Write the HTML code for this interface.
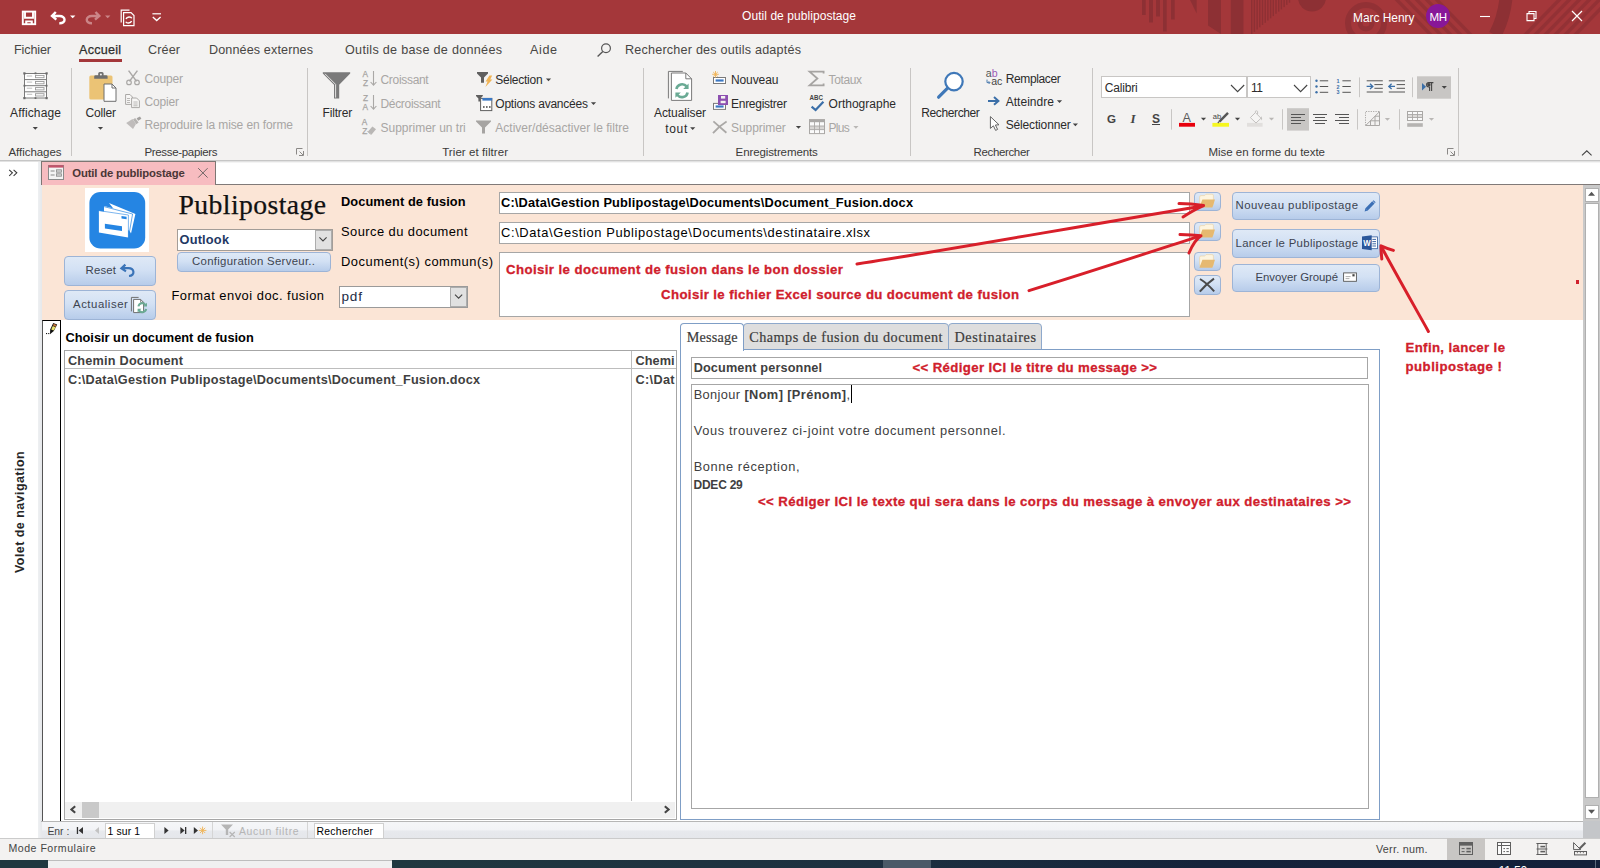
<!DOCTYPE html>
<html lang="fr"><head><meta charset="utf-8"><title>Outil de publipostage</title>
<style>
html,body{margin:0;padding:0}
body{width:1600px;height:868px;position:relative;overflow:hidden;background:#fff;font-family:"Liberation Sans",sans-serif}
.a{position:absolute}
.t{position:absolute;white-space:pre;line-height:1;font-family:"Liberation Sans",sans-serif;font-size:12px;color:#2b2b2b}
.tab{font-size:12.6px;color:#484644}
.rb{font-size:12px;color:#2b2b2b}
.rd{font-size:12px;color:#a8a6a4}
.gl{font-size:11.5px;color:#3b3a39}
.w{color:#fff}
.cal{font-size:12.9px;color:#000}
.calb{font-size:12.8px;color:#000;font-weight:bold}
.calg{font-size:12.8px;color:#404040}
.calgb{font-size:12.7px;color:#404040;font-weight:bold}
.btn{font-size:11.4px;color:#3d4450}
.red{font-size:13.2px;color:#d0202c;font-weight:bold;-webkit-text-stroke:0.3px #d0202c}
.ser{font-family:"Liberation Serif",serif;font-size:14.2px;color:#3c3c3c;-webkit-text-stroke:0.2px #3c3c3c}
.btnbox{position:absolute;border:1px solid #9db4d6;border-radius:4px;background:linear-gradient(#dfe9f6,#d3e1f4 45%,#b7ccea);box-sizing:border-box}
.box{position:absolute;background:#fff;border:1px solid #a6a6a6;box-sizing:border-box}
.sep{position:absolute;width:1px;background:#c8c6c4}
</style></head><body>

<!-- ================= TITLE BAR ================= -->
<div class="a" id="titlebar" style="left:0;top:0;width:1600px;height:34px;background:#a4373a"></div>

<svg class="a" style="left:0;top:0" width="1600" height="34" viewBox="0 0 1600 34">
<g fill="#8d3034">
<rect x="1142" y="0" width="3.7" height="15"/><rect x="1149" y="0" width="4" height="22.5"/><rect x="1156" y="0" width="4" height="16.5"/><rect x="1163" y="0" width="3.7" height="31.5"/><rect x="1171" y="0" width="3.7" height="19.5"/>
<polygon points="1190,0 1196.7,0 1196.7,13.5"/>
<polygon points="1208,0 1221,0 1221,34 1208,25.5"/>
<rect x="1230.8" y="0" width="12.7" height="34"/>
<rect x="1251.0" y="0" width="1.4" height="34.0"/><rect x="1253.7" y="0" width="1.4" height="31.8"/><rect x="1256.4" y="0" width="1.4" height="29.5"/><rect x="1259.1" y="0" width="1.4" height="27.3"/><rect x="1261.8" y="0" width="1.4" height="25.0"/><rect x="1264.5" y="0" width="1.4" height="22.8"/><rect x="1267.2" y="0" width="1.4" height="20.6"/><rect x="1269.9" y="0" width="1.4" height="18.3"/><rect x="1272.6" y="0" width="1.4" height="16.1"/><rect x="1275.3" y="0" width="1.4" height="13.8"/><rect x="1278.0" y="0" width="1.4" height="11.6"/><rect x="1280.7" y="0" width="1.4" height="9.4"/><rect x="1283.4" y="0" width="1.4" height="7.1"/><rect x="1286.1" y="0" width="1.4" height="4.9"/><rect x="1288.8" y="0" width="1.4" height="2.7"/>
<circle cx="1312" cy="-2.5" r="14"/>
</g>
<g fill="none" stroke="#8d3034">
<circle cx="1366" cy="23" r="18" stroke-width="6" opacity="0.8"/>
<circle cx="1366" cy="23" r="6" stroke-width="5" opacity="0.8"/>
<path d="M1506,-2 Q1504,18 1495,35" stroke-width="13"/>
<path d="M1394,-3 L1432,36 M1404,-3 L1442,36 M1414,-3 L1452,36 M1424,-3 L1462,36 M1434,-3 L1472,36" stroke-width="3.5" opacity="0.75"/>
<path d="M1562,-3 L1524,36 M1572,-3 L1534,36 M1582,-3 L1544,36 M1592,-3 L1554,36 M1602,-3 L1564,36 M1612,-3 L1574,36" stroke-width="3.5" opacity="0.75"/>
</g>
<!-- save -->
<g fill="none" stroke="#fff" stroke-width="1.9">
<rect x="22.8" y="11.6" width="12.4" height="12.6"/>
<path d="M25,11.6 V17.8 H33 V11.6"/>
</g>
<path d="M25.2,20.4 H32.8 V24.5 H30.7 V22.2 H27.3 V24.5 H25.2 Z" fill="#fff"/>
<!-- undo -->
<path d="M55.8,12 L52,16 L56.3,19.6 M52.5,16 H59.5 C66,16 66.5,23.5 59.3,23.2" fill="none" stroke="#fff" stroke-width="2.4"/>
<polygon points="70,15.6 75.4,15.6 72.7,18.3" fill="#fff"/>
<!-- redo -->
<path d="M95.5,12 L99.3,16 L95,19.6 M98.8,16 H91.8 C85.3,16 84.8,23.5 92,23.2" fill="none" stroke="#cb8587" stroke-width="2.4"/>
<polygon points="105,15.6 110.4,15.6 107.7,18.3" fill="#cb8587"/>
<!-- doc refresh -->
<g fill="none" stroke="#fff" stroke-width="1.2">
<path d="M121.2,22.5 V10.2 H129.5"/>
<path d="M123.6,12.6 H131 L134,15.6 V25.6 H123.6 Z"/>
<path d="M126,19 C127,16.5 131,16.5 131.8,18.3 M131.6,21 C130.6,23.5 126.6,23.5 125.8,21.7" stroke-width="1.4"/>
</g>
<!-- customize -->
<path d="M152.4,13.8 H161" stroke="#fff" stroke-width="1.2"/>
<path d="M152.8,17 L156.7,20.6 L160.6,17" fill="none" stroke="#fff" stroke-width="1.3"/>
<!-- window controls -->
<path d="M1480,16.5 H1490" stroke="#fff" stroke-width="1.1"/>
<path d="M1527,13.6 H1534 V20.6 H1527 Z M1529,13.4 V11.5 H1536 V18.5 H1534.2" fill="none" stroke="#fff" stroke-width="1.1"/>
<path d="M1572,11 L1582,21 M1582,11 L1572,21" stroke="#fff" stroke-width="1.2"/>
</svg>
<span class="t w" style="left:742px;top:10.00px;letter-spacing:0.062px;font-size:12px">Outil de publipostage</span>
<span class="t w" style="left:1353px;top:10.80px;transform:scaleX(0.9023);transform-origin:0 0;font-size:13.2px">Marc Henry</span>
<div class="a" style="left:1426px;top:4px;width:24px;height:24px;border-radius:12px;background:#881798"></div>
<span class="t w" style="left:1429.6px;top:10.80px;font-size:11.6px;letter-spacing:-0.6px">MH</span>

<!-- ================= RIBBON TABS ================= -->
<div class="a" id="tabrow" style="left:0;top:34px;width:1600px;height:29px;background:#f3f2f1"></div>
<span class="t tab" style="left:14px;top:43.50px;letter-spacing:-0.133px;">Fichier</span>
<span class="t tab" style="left:79px;top:43.50px;letter-spacing:0.232px;color:#2f2e2d;-webkit-text-stroke:0.25px #2f2e2d">Accueil</span>
<div class="a" style="left:79px;top:59px;width:43px;height:3px;background:#a4373a"></div>
<span class="t tab" style="left:148px;top:43.50px;letter-spacing:0.125px;">Créer</span>
<span class="t tab" style="left:209px;top:43.50px;letter-spacing:0.119px;">Données externes</span>
<span class="t tab" style="left:345px;top:43.50px;letter-spacing:0.298px;">Outils de base de données</span>
<span class="t tab" style="left:530px;top:43.50px;letter-spacing:0.594px;">Aide</span>
<span class="t tab" style="left:625px;top:43.50px;letter-spacing:0.210px;">Rechercher des outils adaptés</span>

<!-- ================= RIBBON ================= -->
<div class="a" id="ribbon" style="left:0;top:63px;width:1600px;height:97px;background:#f3f2f1"></div>
<div class="a" style="left:0;top:160px;width:1600px;height:1px;background:#c6c6c6"></div>
<div class="a" style="left:0;top:161px;width:1600px;height:1px;background:#e2e2e2"></div>
<div class="a" style="left:0;top:162px;width:1600px;height:1px;background:#f4f4f4"></div>
<div class="sep" style="left:71px;top:68px;height:88px"></div>
<div class="sep" style="left:307px;top:68px;height:88px"></div>
<div class="sep" style="left:643px;top:68px;height:88px"></div>
<div class="sep" style="left:910px;top:68px;height:88px"></div>
<div class="sep" style="left:1092px;top:68px;height:88px"></div>
<div class="sep" style="left:1458px;top:68px;height:88px"></div>

<div class="a" style="left:1101px;top:76px;width:146px;height:22px;background:#fff;border:1px solid #c8c6c4;box-sizing:border-box"></div>
<div class="a" style="left:1247px;top:76px;width:64px;height:22px;background:#fff;border:1px solid #c8c6c4;border-left:1px solid #c8c6c4;box-sizing:border-box"></div>
<svg class="a" style="left:0;top:33px" width="1600" height="130" viewBox="0 33 1600 130">
<!-- search tab icon -->
<circle cx="606" cy="48.2" r="4.4" fill="none" stroke="#555" stroke-width="1.2"/>
<path d="M602.8,51.6 L597.6,56.4" stroke="#555" stroke-width="1.4"/>


<!-- Affichage -->
<g>
<rect x="24.5" y="73.5" width="22" height="24.5" fill="#fff" stroke="#7a7a7a" stroke-width="1"/>
<path d="M24.5,79.6 H46.5 M24.5,85.7 H46.5 M24.5,91.8 H46.5" stroke="#7a7a7a" stroke-width="1"/>
<g fill="none" stroke="#9a9a9a" stroke-width="0.9">
<rect x="35.5" y="75.4" width="8.5" height="2.3"/><rect x="35.5" y="81.5" width="8.5" height="2.3"/><rect x="35.5" y="87.6" width="8.5" height="2.3"/><rect x="35.5" y="93.7" width="8.5" height="2.3"/>
<path d="M26.8,76 H32.2 M26.8,82.1 H32.2 M26.8,88.2 H32.2 M26.8,94.3 H32.2" stroke="#b5b5b5"/>
</g>
<g fill="#6a6a6a">
<rect x="23.3" y="72.3" width="2.2" height="2.2"/><rect x="45.5" y="72.3" width="2.2" height="2.2"/><rect x="23.3" y="97" width="2.2" height="2.2"/><rect x="45.5" y="97" width="2.2" height="2.2"/>
<rect x="34.6" y="72.4" width="1.8" height="1.8"/><rect x="34.6" y="97.2" width="1.8" height="1.8"/><rect x="23.5" y="84.8" width="1.8" height="1.8"/><rect x="45.7" y="84.8" width="1.8" height="1.8"/>
</g>
</g>

<!-- Coller -->
<rect x="89.3" y="75.4" width="23.2" height="24" rx="1.5" fill="#ebc375"/>
<path d="M94.2,78.8 V76.6 Q94.2,75.2 95.6,75.2 H98.2 V73.6 Q98.2,72 99.8,72 H102 Q103.6,72 103.6,73.6 V75.2 H106.2 Q107.6,75.2 107.6,76.6 V78.8 Z" fill="#6f6f6f"/>
<circle cx="100.9" cy="74.6" r="1" fill="#f3f2f1"/>
<path d="M104,84 H112 L116,88 V101.3 H104 Z" fill="#fff" stroke="#6f6f6f" stroke-width="1"/>
<path d="M112,84 V88 H116" fill="none" stroke="#6f6f6f" stroke-width="1"/>

<!-- Couper (scissors, disabled) -->
<g fill="none" stroke="#aaa8a6" stroke-width="1.5">
<path d="M128.6,70.6 L136.6,81.4 M137.4,70.6 L129.4,81.4"/>
<circle cx="129" cy="82.4" r="2.3" stroke-width="1.2"/><circle cx="137" cy="82.4" r="2.3" stroke-width="1.2"/>
</g>
<!-- Copier -->
<g fill="#f7f6f5" stroke="#aaa8a6" stroke-width="1">
<path d="M125.6,94.5 H130 L132.4,97 V104.4 H125.6 Z"/>
<path d="M131.6,98 H136.6 L139.4,100.8 V107.6 H131.6 Z"/>
<path d="M127,98.5 H130 M127,100.5 H130 M127,102.5 H130 M133.4,102 H137.6 M133.4,104 H137.6 M133.4,105.8 H137.6" fill="none" stroke-width="0.8"/>
</g>
<!-- brush -->
<g fill="#b5b3b1">
<path d="M126.2,123 L132.5,119 L136,124 L133,129 Z" opacity="0.85"/>
<path d="M133,119.5 L135.2,118 L138.6,122.6 L136.4,124.2 Z"/>
<path d="M136.6,118.2 L140,116.6 L141.4,118.8 L138.2,120.8 Z" fill="#a3a19f"/>
</g>

<!-- Filtrer big -->
<path d="M322.8,72.2 H350.2 V73.6 L339.2,84.8 V98.6 H334 V84.8 L322.8,73.6 Z" fill="#7a7a7a"/>
<path d="M325,73.8 L335.6,84.4 V97.6" fill="none" stroke="#f3f2f1" stroke-width="0.9"/>

<!-- sort icons -->
<g font-family="Liberation Sans, sans-serif" font-size="8.3" fill="#a6a4a2" stroke="#a6a4a2" stroke-width="0.25">
<text x="362.6" y="77.1">A</text><text x="363" y="85.6">Z</text>
<text x="363" y="101.1">Z</text><text x="362.6" y="109.6">A</text>
<text x="361.8" y="125.1">A</text><text x="362.2" y="133.6">Z</text>
</g>
<g fill="none" stroke="#aaa8a6" stroke-width="1.1">
<path d="M373.5,71 V85 M370.6,82 L373.5,85.2 L376.4,82"/>
<path d="M373.5,95 V109 M370.6,106 L373.5,109.2 L376.4,106"/>
</g>
<path d="M368,131.6 L372.4,126.4 L376,129.2 L371.6,134.4 Z" fill="#b9b7b5"/>
<path d="M367.6,131.2 L371,134.6" stroke="#aaa8a6" stroke-width="1"/>

<!-- Sélection -->
<path d="M477,72 H488 V73.4 L484,77.6 V82.8 H481 V77.6 L477,73.4 Z" fill="#5f5f5f"/>
<polygon points="489.4,75.6 492.2,75.6 490.2,79.4 492.4,79.4 485.4,87 487.6,81.6 485.6,81.6" fill="#f0b354"/>
<!-- Options avancées -->
<path d="M476,95 H482.8 V96 L480.4,98.6 V101.6 H478.4 V98.6 L476,96 Z" fill="#5f5f5f"/>
<rect x="480.6" y="98.4" width="11.2" height="12.2" fill="#fff" stroke="#5f5f5f" stroke-width="1"/>
<rect x="482.4" y="98" width="9.8" height="2.6" fill="#3b78c3"/>
<path d="M483,107 h1.6 M486,107 h1.6 M489,107 h1.6" stroke="#444" stroke-width="1.4"/>
<!-- Activer filtre -->
<path d="M476,120.4 H491 V121.6 L485,127.6 V133.6 H482 V127.6 L476,121.6 Z" fill="#a6a4a2"/>

<!-- Actualiser tout -->
<path d="M668.4,98.4 V71.4 H682.8" fill="none" stroke="#7a7a7a" stroke-width="1"/>
<path d="M671.4,73 H685.8 L691.6,78.8 V100.4 H671.4 Z" fill="#fff" stroke="#7a7a7a" stroke-width="1"/>
<path d="M685.8,73 V78.8 H691.6" fill="none" stroke="#7a7a7a" stroke-width="1"/>
<g fill="none" stroke="#6aaa94" stroke-width="2.6">
<path d="M676.4,89 A5.8,5.8 0 0 1 686.6,86.4"/>
<path d="M687.6,92.4 A5.8,5.8 0 0 1 677.4,95"/>
</g>
<path d="M688.6,83.6 V89 H683.2 Z M675.4,97.8 V92.4 H680.8 Z" fill="#6aaa94"/>

<!-- Nouveau -->
<rect x="713.5" y="77.5" width="12" height="6" fill="#fff" stroke="#7a7a7a" stroke-width="1"/>
<rect x="715.6" y="79.4" width="8" height="2.2" fill="#3b78c3"/>
<path d="M715.5,71 v6.6 M712.2,74.3 h6.6 M713.2,72 l4.6,4.6 M717.8,72 l-4.6,4.6" stroke="#f0b354" stroke-width="0.9"/>
<!-- Enregistrer -->
<rect x="713.5" y="103.4" width="12" height="6" fill="#fff" stroke="#7a7a7a" stroke-width="1"/>
<rect x="715.6" y="105.4" width="8" height="2.2" fill="#3b78c3"/>
<rect x="718" y="95" width="10" height="10" fill="#8c4fb0"/>
<rect x="721" y="96" width="4.2" height="2.6" fill="#f3f2f1"/><rect x="720.6" y="100.8" width="5" height="2.4" fill="#f3f2f1"/>
<!-- Supprimer X -->
<path d="M713.4,121.4 L726.4,132.8 M726.6,121.6 C721,125 716.6,129 713,133.2" fill="none" stroke="#aaa8a6" stroke-width="1.8"/>

<!-- Totaux sigma -->
<path d="M823.6,73.4 V71.6 H809.6 L817.4,78.5 L809.6,85.4 H823.6 V83.4" fill="none" stroke="#a6a4a2" stroke-width="1.8"/>
<!-- Orthographe -->
<text x="809.6" y="99.6" font-family="Liberation Sans, sans-serif" font-size="6.4" font-weight="bold" fill="#444" textLength="13.4" lengthAdjust="spacingAndGlyphs">ABC</text>
<path d="M811.6,106.6 L815.6,110 L823.4,101.8" fill="none" stroke="#3b6fa8" stroke-width="2.2"/>
<!-- Plus -->
<rect x="809.5" y="119.6" width="15" height="14" fill="#fafafa" stroke="#aaa8a6" stroke-width="1"/>
<rect x="809.5" y="119.6" width="15" height="2.6" fill="#aaa8a6"/>
<rect x="810" y="126" width="14" height="3.6" fill="#d8d6d4"/>
<path d="M814.5,122 V133.6 M819.5,122 V133.6 M809.5,126 H824.5 M809.5,129.6 H824.5" stroke="#aaa8a6" stroke-width="0.9"/>

<!-- Rechercher magnifier -->
<circle cx="954" cy="81.6" r="8.7" fill="#fff" stroke="#3f78b8" stroke-width="2.2"/>
<path d="M947.6,88.2 L938.6,97.2" stroke="#3f78b8" stroke-width="3.2" stroke-linecap="round"/>
<!-- Remplacer -->
<g font-family="Liberation Sans, sans-serif" font-size="10.6">
<text x="985.8" y="77" fill="#555">a<tspan fill="#9b59b6">b</tspan></text>
<text x="991.2" y="84.6" fill="#444">ac</text>
</g>
<path d="M987,79.6 V82.6 H989.8 M988.6,81.2 L990,82.6 L988.6,84" fill="none" stroke="#3b6fa8" stroke-width="0.9"/>
<!-- Atteindre -->
<path d="M988,100.9 H998 M994,97 L998.4,100.9 L994,104.8" fill="none" stroke="#3b6fa8" stroke-width="2"/>
<!-- Sélectionner cursor -->
<path d="M990.4,116.6 V128.4 L993.4,125.8 L995.6,130.4 L997.6,129.4 L995.4,125 L999,124.8 Z" fill="#fff" stroke="#555" stroke-width="0.9"/>

<!-- font box chevrons -->
<path d="M1231,85 L1237.6,91.6 L1244.2,85 M1294,85 L1300.6,91.6 L1307.2,85" fill="none" stroke="#444" stroke-width="1.1"/>

<!-- bullets -->
<g fill="#3b6fa8"><circle cx="1316.5" cy="80.8" r="1.2"/><circle cx="1316.5" cy="86.5" r="1.2"/><circle cx="1316.5" cy="92.3" r="1.2"/></g>
<path d="M1319.8,80.8 H1328.2 M1319.8,86.5 H1328.2 M1319.8,92.3 H1328.2 M1342.4,80.8 H1350.8 M1342.4,86.5 H1350.8 M1342.4,92.3 H1350.8" stroke="#555" stroke-width="1"/>
<g font-family="Liberation Sans, sans-serif" font-size="5.4" font-weight="bold" fill="#3b6fa8"><text x="1336.6" y="82.8">1</text><text x="1336.6" y="88.6">2</text><text x="1336.6" y="94.4">3</text></g>
<path d="M1359.5,77.4 V97.2 M1412.5,77.4 V97.2 M1171.5,109.2 V129.6 M1282.5,109.2 V129.6 M1357.5,109.2 V129.6 M1399.5,109.2 V129.6" stroke="#c8c6c4" stroke-width="1"/>
<!-- indent -->
<path d="M1366.7,80.8 H1382.8 M1374.4,84.6 H1382.8 M1374.4,88.3 H1382.8 M1366.7,92 H1382.8 M1388.8,80.8 H1405 M1396.6,84.6 H1405 M1396.6,88.3 H1405 M1388.8,92 H1405" stroke="#555" stroke-width="1"/>
<path d="M1366.6,86.4 H1372.4 M1370,83.8 L1372.8,86.4 L1370,89" fill="none" stroke="#3b6fa8" stroke-width="1.3"/>
<path d="M1395,86.4 H1389.2 M1391.6,83.8 L1388.8,86.4 L1391.6,89" fill="none" stroke="#3b6fa8" stroke-width="1.3"/>
<!-- pilcrow button -->
<rect x="1417" y="76.3" width="34" height="22.4" fill="#c8c6c4"/>
<polygon points="1422,83 1426,86.8 1422,90.6" fill="#3b6fa8"/>
<path d="M1431.6,82.6 H1428.8 A2.2,2.2 0 0 0 1428.8,87 H1429.6 V91 M1431.6,82.6 V91 M1431,82.6 H1433.4" fill="none" stroke="#444" stroke-width="1.1"/>
<circle cx="1428.9" cy="84.8" r="1.7" fill="#444"/>

<!-- G I S row icons -->
<rect x="1179" y="122.9" width="16" height="3.8" fill="#e8000d"/>
<text x="1182.6" y="122.2" font-family="Liberation Sans, sans-serif" font-size="12.6" fill="#5a5a5a">A</text>
<rect x="1212.4" y="122.9" width="16.6" height="3.8" fill="#f6f720"/>
<text x="1212.8" y="118.6" font-family="Liberation Sans, sans-serif" font-size="7.6" fill="#444">ab</text>
<path d="M1228,112.8 L1219.4,121.6" stroke="#555" stroke-width="2.4"/>
<path d="M1219.6,121.2 L1217.8,123" stroke="#555" stroke-width="1.2"/>
<rect x="1247" y="122.9" width="15.6" height="3.8" fill="#e1dfdd"/>
<path d="M1250.4,117.6 L1255.4,112.6 L1261,118.2 L1256,123 Z M1255.4,112.6 V111.2 Q1256.6,110.4 1257.6,111.4 V114" fill="#f6f5f4" stroke="#c3c1bf" stroke-width="1"/>
<path d="M1261,116 Q1263,118.4 1262,120.6 Q1260.4,119.4 1261,116 Z" fill="#c3c1bf"/>

<!-- alignment -->
<rect x="1287" y="108.2" width="22" height="22.4" fill="#c8c6c4"/>
<g stroke="#555" stroke-width="1.1">
<path d="M1291,114.5 H1305 M1291,117.5 H1301 M1291,120.5 H1305 M1291,123.5 H1301"/>
<path d="M1313,114.5 H1327 M1315,117.5 H1325 M1313,120.5 H1327 M1315,123.5 H1325"/>
<path d="M1335,114.5 H1349 M1339,117.5 H1349 M1335,120.5 H1349 M1339,123.5 H1349"/>
</g>
<!-- gridlines icon -->
<g fill="none" stroke="#aaa8a6" stroke-width="1">
<path d="M1365.5,125.5 V111.5 H1379.5" stroke-dasharray="1.2 1.2"/>
<path d="M1365.5,125.5 H1379.5 V111.5 M1366,125.2 L1379.2,112 M1370.5,125.5 V120.6 M1375,125.5 V116 M1370.5,120.8 H1379.5 M1375,116.2 H1379.5"/>
</g>
<!-- alternate row -->
<rect x="1407.5" y="111.5" width="15" height="9" fill="#fafafa" stroke="#aaa8a6" stroke-width="1"/>
<rect x="1408" y="114.5" width="14" height="3" fill="#dddbd9"/>
<path d="M1412.5,111.5 V120.5 M1417.5,111.5 V120.5 M1407.5,114.5 H1422.5 M1407.5,117.5 H1422.5" stroke="#aaa8a6" stroke-width="0.9"/>
<rect x="1407.2" y="123.2" width="15.6" height="3.6" fill="#b5b3b1"/>

<!-- dialog launchers -->
<g fill="none" stroke="#8a8886" stroke-width="1">
<path d="M296.5,154.5 V148.5 H302.5 M303.5,151 V155.5 H299 M299.6,151.6 L303,155"/>
<path d="M1447.5,154.5 V148.5 H1453.5 M1454.5,151 V155.5 H1450 M1450.6,151.6 L1454,155"/>
</g>
<!-- collapse chevron -->
<path d="M1582,155.4 L1586.8,150.8 L1591.6,155.4" fill="none" stroke="#444" stroke-width="1.1"/>
<!-- dropdown arrows -->
<g fill="#444">
<polygon transform="translate(35.3,128.4)" points="-2.6,-1.4 2.6,-1.4 0,1.4"/><polygon transform="translate(100.5,128.4)" points="-2.6,-1.4 2.6,-1.4 0,1.4"/>
<polygon transform="translate(548.5,79.8)" points="-2.6,-1.4 2.6,-1.4 0,1.4"/><polygon transform="translate(593.5,103.6)" points="-2.6,-1.4 2.6,-1.4 0,1.4"/>
<polygon transform="translate(692.7,128.6)" points="-2.6,-1.4 2.6,-1.4 0,1.4"/><polygon transform="translate(798.5,127.4)" points="-2.6,-1.4 2.6,-1.4 0,1.4"/>
<polygon transform="translate(1059.5,101.6)" points="-2.6,-1.4 2.6,-1.4 0,1.4"/><polygon transform="translate(1075.4,124.8)" points="-2.6,-1.4 2.6,-1.4 0,1.4"/>
<polygon transform="translate(1203.5,119.2)" points="-2.6,-1.4 2.6,-1.4 0,1.4"/><polygon transform="translate(1237.5,119.2)" points="-2.6,-1.4 2.6,-1.4 0,1.4"/>
<polygon transform="translate(1444.3,87.4)" points="-2.6,-1.4 2.6,-1.4 0,1.4"/>
</g>
<g fill="#b9b7b5">
<polygon transform="translate(855.9,127.4)" points="-2.6,-1.4 2.6,-1.4 0,1.4"/><polygon transform="translate(1271.5,119.2)" points="-2.6,-1.4 2.6,-1.4 0,1.4"/><polygon transform="translate(1387.4,119.4)" points="-2.6,-1.4 2.6,-1.4 0,1.4"/><polygon transform="translate(1431.5,119.4)" points="-2.6,-1.4 2.6,-1.4 0,1.4"/>
</g>
</svg>

<span class="t rb" style="left:10px;top:107.00px;letter-spacing:0.146px;">Affichage</span>
<span class="t gl" style="left:8.4px;top:146.60px;letter-spacing:-0.033px;">Affichages</span>
<span class="t rb" style="left:85.6px;top:107.00px;letter-spacing:-0.189px;">Coller</span>
<span class="t rd" style="left:144.4px;top:73.00px;letter-spacing:-0.152px;">Couper</span>
<span class="t rd" style="left:144.4px;top:96.00px;letter-spacing:-0.152px;">Copier</span>
<span class="t rd" style="left:144.4px;top:118.60px;letter-spacing:-0.108px;">Reproduire la mise en forme</span>
<span class="t gl" style="left:144.4px;top:146.60px;letter-spacing:-0.319px;">Presse-papiers</span>

<span class="t rb" style="left:322.5px;top:106.70px;letter-spacing:-0.162px;">Filtrer</span>
<span class="t rd" style="left:380.5px;top:74.00px;letter-spacing:-0.311px;">Croissant</span>
<span class="t rd" style="left:380.5px;top:98.00px;letter-spacing:-0.326px;">Décroissant</span>
<span class="t rd" style="left:380.5px;top:122.00px;letter-spacing:-0.005px;">Supprimer un tri</span>
<span class="t rb" style="left:495.3px;top:74.00px;letter-spacing:-0.259px;">Sélection</span>
<span class="t rb" style="left:495.3px;top:98.00px;letter-spacing:-0.224px;">Options avancées</span>
<span class="t rd" style="left:495.3px;top:122.00px;letter-spacing:0.011px;">Activer/désactiver le filtre</span>
<span class="t gl" style="left:442.2px;top:146.60px;letter-spacing:0.070px;">Trier et filtrer</span>

<span class="t rb" style="left:654px;top:106.70px;letter-spacing:-0.076px;">Actualiser</span>
<span class="t rb" style="left:665.2px;top:122.70px;letter-spacing:0.695px;">tout</span>
<span class="t rb" style="left:731px;top:74.00px;letter-spacing:-0.108px;">Nouveau</span>
<span class="t rb" style="left:731px;top:98.00px;letter-spacing:-0.269px;">Enregistrer</span>
<span class="t rd" style="left:731px;top:122.00px;letter-spacing:-0.070px;">Supprimer</span>
<span class="t rd" style="left:828.6px;top:74.00px;letter-spacing:-0.392px;">Totaux</span>
<span class="t rb" style="left:828.6px;top:98.00px;letter-spacing:0.001px;">Orthographe</span>
<span class="t rd" style="left:828.6px;top:122.00px;letter-spacing:-0.748px;">Plus</span>
<span class="t gl" style="left:735.6px;top:146.60px;letter-spacing:-0.110px;">Enregistrements</span>

<span class="t rb" style="left:921.3px;top:106.70px;letter-spacing:-0.392px;">Rechercher</span>
<span class="t rb" style="left:1005.7px;top:72.50px;letter-spacing:-0.366px;">Remplacer</span>
<span class="t rb" style="left:1005.7px;top:95.70px;letter-spacing:0.034px;">Atteindre</span>
<span class="t rb" style="left:1005.7px;top:118.60px;letter-spacing:-0.156px;">Sélectionner</span>
<span class="t gl" style="left:973.5px;top:146.60px;letter-spacing:-0.350px;">Rechercher</span>

<span class="t rb" style="left:1104.7px;top:82.00px;letter-spacing:-0.153px;">Calibri</span>
<span class="t rb" style="left:1250.9px;top:82.00px;letter-spacing:-0.3px">11</span>
<span class="t gl" style="left:1208.5px;top:146.60px;letter-spacing:-0.023px;">Mise en forme du texte</span>
<span class="t rb" style="left:1107px;top:112.60px;font-weight:bold;color:#444;font-size:11.6px">G</span>
<span class="t rb" style="left:1130.5px;top:111.80px;font-style:italic;font-family:'Liberation Serif',serif;font-weight:bold;font-size:13px;color:#444">I</span>
<span class="t rb" style="left:1152px;top:112.80px;text-decoration:underline;color:#444;font-weight:bold">S</span>

<!-- ================= LEFT NAV PANE ================= -->
<div class="a" style="left:0;top:162px;width:38px;height:676px;background:#fff"></div>
<div class="a" style="left:37.5px;top:162px;width:4px;height:676px;background:linear-gradient(90deg,#eef0f2,#e6e8eb)"></div>
<div class="a" style="left:14px;top:450.5px;width:13px;height:122px">
  <span style="position:absolute;left:0;top:122px;transform-origin:0 0;transform:rotate(-90deg);white-space:pre;font:bold 12.5px/13px 'Liberation Sans',sans-serif;color:#262626;letter-spacing:0.44px" id="volet">Volet de navigation</span>
</div>

<!-- ================= DOC TAB ================= -->
<div class="a" style="left:41px;top:161px;width:175px;height:24px;background:#f7bcc0;border:1px solid #7d7673;border-bottom:none;box-sizing:border-box"></div>
<div class="a" style="left:215px;top:184px;width:1385px;height:1px;background:#807a78"></div>
<span class="t rb" style="left:72.3px;top:167.80px;letter-spacing:-0.154px;color:#4a3636;font-size:11.3px;font-weight:bold">Outil de publipostage</span>

<!-- ================= FORM HEADER ================= -->
<div class="a" id="hdr" style="left:42px;top:185px;width:1541px;height:135px;background:#fbe5d6"></div>
<span class="t ser" style="left:178.5px;top:190.80px;letter-spacing:0.403px;font-size:27.7px;color:#111;-webkit-text-stroke:0.25px #111">Publipostage</span>

<div class="box" style="left:177px;top:229px;width:156px;height:22px;border-color:#a39d98"></div>
<div class="a" style="left:315px;top:230px;width:17px;height:20px;background:#e1e1e1;border:1px solid #adadad;box-sizing:border-box"></div>
<span class="t calb" style="left:179.5px;top:234.00px;letter-spacing:0.193px;color:#1f3864">Outlook</span>
<div class="btnbox" style="left:177px;top:252px;width:154px;height:20px"></div>
<span class="t btn" style="left:192px;top:256.00px;letter-spacing:0.295px;">Configuration Serveur..</span>
<div class="btnbox" style="left:64px;top:256px;width:92px;height:30px"></div>
<span class="t btn" style="left:85.5px;top:264.80px;letter-spacing:0.184px;">Reset</span>
<div class="btnbox" style="left:64px;top:290px;width:92px;height:30px"></div>
<span class="t btn" style="left:73px;top:298.70px;letter-spacing:0.532px;">Actualiser</span>
<span class="t cal" style="left:171.5px;top:290.00px;letter-spacing:0.493px;">Format envoi doc. fusion</span>
<div class="box" style="left:339px;top:286px;width:129px;height:22px;border-color:#9a9a9a"></div>
<div class="a" style="left:450px;top:287px;width:17px;height:20px;background:#e1e1e1;border:1px solid #adadad;box-sizing:border-box"></div>
<span class="t cal" style="left:341.5px;top:290.00px;letter-spacing:0.797px;color:#222b45;font-size:13.6px">pdf</span>

<span class="t calb" style="left:341px;top:196.00px;letter-spacing:0.088px;">Document de fusion</span>
<span class="t cal" style="left:341px;top:226.00px;letter-spacing:0.443px;">Source du document</span>
<span class="t cal" style="left:341px;top:256.00px;letter-spacing:0.509px;">Document(s) commun(s)</span>
<div class="box" style="left:499px;top:192px;width:691px;height:22px"></div>
<div class="box" style="left:499px;top:222px;width:691px;height:22px"></div>
<div class="box" style="left:499px;top:252px;width:691px;height:65px"></div>
<span class="t calb" style="left:501px;top:197.00px;letter-spacing:0.177px;">C:\Data\Gestion Publipostage\Documents\Document_Fusion.docx</span>
<span class="t cal" style="left:501px;top:227.00px;letter-spacing:0.625px;">C:\Data\Gestion Publipostage\Documents\destinataire.xlsx</span>
<span class="t red" style="left:506px;top:262.70px;letter-spacing:0.426px;">Choisir le document de fusion dans le bon dossier</span>
<span class="t red" style="left:661px;top:287.70px;letter-spacing:0.402px;">Choisir le fichier Excel source du document de fusion</span>

<div class="btnbox" style="left:1194px;top:192px;width:27px;height:19px"></div>
<div class="btnbox" style="left:1194px;top:222px;width:27px;height:19px"></div>
<div class="btnbox" style="left:1194px;top:252px;width:27px;height:19px"></div>
<div class="btnbox" style="left:1194px;top:275px;width:27px;height:20px"></div>
<div class="btnbox" style="left:1232px;top:192px;width:148px;height:28px"></div>
<div class="btnbox" style="left:1232px;top:229px;width:148px;height:29px"></div>
<div class="btnbox" style="left:1232px;top:264px;width:148px;height:28px"></div>
<span class="t btn" style="left:1235.5px;top:199.80px;letter-spacing:0.480px;">Nouveau publipostage</span>
<span class="t btn" style="left:1235.5px;top:238.00px;letter-spacing:0.315px;">Lancer le Publipostage</span>
<span class="t btn" style="left:1255.5px;top:271.80px;letter-spacing:-0.035px;">Envoyer Groupé</span>
<div class="a" style="left:1576px;top:280px;width:3px;height:4px;background:#d0202c"></div>

<!-- ================= DETAIL ================= -->
<div class="a" style="left:41.5px;top:320px;width:19.5px;height:501px;border:1px solid #000;border-left:1px solid #555;border-bottom:none;box-sizing:border-box;background:#fff"></div>
<span class="t calb" style="left:65.5px;top:331.70px;letter-spacing:-0.007px;">Choisir un document de fusion</span>
<div class="box" style="left:64px;top:350px;width:613px;height:470px;border-color:#a6a6a6"></div>
<div class="a" style="left:65px;top:368px;width:611px;height:1px;background:#bdbdbd"></div>
<div class="a" style="left:631px;top:351px;width:1px;height:450px;background:#bdbdbd"></div>
<span class="t calgb" style="left:68px;top:355.00px;letter-spacing:0.208px;">Chemin Document</span>
<span class="t calgb" style="left:68px;top:373.70px;letter-spacing:0.236px;">C:\Data\Gestion Publipostage\Documents\Document_Fusion.docx</span>
<span class="t calgb" style="left:635.5px;top:355.00px;letter-spacing:0.055px;">Chemi</span>
<span class="t calgb" style="left:635.5px;top:373.70px;letter-spacing:0.328px;">C:\Dat</span>
<div class="a" style="left:65px;top:802px;width:610px;height:16px;background:#f0f0f0"></div>
<div class="a" style="left:82px;top:802px;width:17px;height:16px;background:#c9c9c9"></div>

<!-- tab control -->
<div class="a" style="left:743px;top:323px;width:206px;height:27px;background:#dedede;border:1px solid #8ea9cc;border-radius:4px 4px 0 0;box-sizing:border-box"></div>
<div class="a" style="left:948px;top:323px;width:94px;height:27px;background:#dedede;border:1px solid #8ea9cc;border-radius:4px 4px 0 0;box-sizing:border-box"></div>
<div class="a" style="left:680px;top:349px;width:700px;height:471px;background:#fff;border:1px solid #7f9ec6;box-sizing:border-box"></div>
<div class="a" style="left:680px;top:323px;width:64px;height:28px;background:#fff;border:1px solid #7f9ec6;border-bottom:none;border-radius:4px 4px 0 0;box-sizing:border-box"></div>
<span class="t ser" style="left:686.7px;top:329.70px;letter-spacing:0.191px;">Message</span>
<span class="t ser" style="left:749.2px;top:329.70px;letter-spacing:0.504px;">Champs de fusion du document</span>
<span class="t ser" style="left:954.5px;top:329.70px;letter-spacing:0.620px;">Destinataires</span>
<div class="box" style="left:691px;top:357px;width:677px;height:22px"></div>
<div class="box" style="left:691px;top:384px;width:678px;height:425px"></div>
<span class="t calgb" style="left:693.7px;top:362.00px;letter-spacing:0.124px;">Document personnel</span>
<span class="t red" style="left:912.5px;top:361.00px;letter-spacing:0.378px;">&lt;&lt; Rédiger ICI le titre du message &gt;&gt;</span>
<span class="t calg" style="left:693.7px;top:389.00px;letter-spacing:0.381px;">Bonjour <b>[Nom] [Prénom]</b>,</span>
<div class="a" style="left:851px;top:385px;width:1px;height:18px;background:#000"></div>
<span class="t calg" style="left:693.7px;top:425.00px;letter-spacing:0.642px;">Vous trouverez ci-joint votre document personnel.</span>
<span class="t calg" style="left:693.7px;top:460.50px;letter-spacing:0.602px;">Bonne réception,</span>
<span class="t calgb" style="left:693.5px;top:478.80px;letter-spacing:-0.231px;font-size:12px">DDEC 29</span>
<span class="t red" style="left:758px;top:494.80px;letter-spacing:0.422px;">&lt;&lt; Rédiger ICI le texte qui sera dans le corps du message à envoyer aux destinataires &gt;&gt;</span>
<span class="t red" style="left:1405.5px;top:341.00px;letter-spacing:0.379px;">Enfin, lancer le</span>
<span class="t red" style="left:1405.5px;top:359.50px;letter-spacing:0.490px;">publipostage !</span>

<!-- scrollbar -->
<div class="a" style="left:1583px;top:185px;width:17px;height:636px;background:#c9c9c9"></div>
<div class="a" style="left:1584.5px;top:187.5px;width:14px;height:14px;background:#fff;border:1px solid #b0b0b0;box-sizing:border-box"></div>
<div class="a" style="left:1584.5px;top:202.5px;width:14px;height:595px;background:#fff;border:1px solid #b0b0b0;box-sizing:border-box"></div>
<div class="a" style="left:1584.5px;top:804.5px;width:14px;height:14px;background:#fff;border:1px solid #b0b0b0;box-sizing:border-box"></div>

<!-- ================= NAV BAR ================= -->
<div class="a" style="left:41px;top:821px;width:1542px;height:1px;background:#b6b6b6"></div>
<div class="a" id="navbar" style="left:42px;top:822px;width:1541px;height:16px;background:linear-gradient(#f5f6f8,#f2f3f6 52%,#e7e9ed 54%,#e5e7eb)"></div>
<div class="a" style="left:1583px;top:821px;width:17px;height:17px;background:#c4c6c9"></div>
<span class="t rb" style="left:47.4px;top:826.60px;letter-spacing:-0.013px;color:#444;font-size:10.4px">Enr :</span>
<div class="a" style="left:105px;top:823px;width:50px;height:15px;background:#fff;border:1px solid #d0d0d0;border-bottom:none;box-sizing:border-box"></div>
<span class="t rb" style="left:107.5px;top:826.60px;letter-spacing:0.122px;color:#000;font-size:10.4px">1 sur 1</span>
<span class="t rd" style="left:239px;top:826.60px;letter-spacing:0.692px;font-size:10.4px;color:#b5b5b5">Aucun filtre</span>
<div class="a" style="left:314px;top:823px;width:70px;height:15px;background:#fff;border:1px solid #d0d0d0;border-bottom:none;box-sizing:border-box"></div>
<span class="t rb" style="left:316.4px;top:826.60px;letter-spacing:0.320px;color:#000;font-size:10.4px">Rechercher</span>

<!-- ================= STATUS BAR ================= -->
<div class="a" id="status" style="left:0;top:838px;width:1600px;height:22px;background:#f3f2f1"></div>
<div class="a" style="left:0;top:838px;width:1600px;height:1px;background:#cbcbcb"></div>
<span class="t rb" style="left:8.4px;top:842.60px;letter-spacing:0.509px;color:#444;font-size:10.6px">Mode Formulaire</span>
<span class="t rb" style="left:1376px;top:843.70px;letter-spacing:0.253px;color:#444;font-size:10.8px">Verr. num.</span>
<div class="a" style="left:1447px;top:838px;width:38px;height:22px;background:#c8c6c4"></div>

<svg class="a" style="left:0;top:160px" width="1600" height="708" viewBox="0 160 1600 708">
<!-- nav pane chevrons -->
<path d="M9.2,169.8 L12.4,172.8 L9.2,175.8 M13.6,169.8 L16.8,172.8 L13.6,175.8" fill="none" stroke="#3a3a3a" stroke-width="1.1"/>
<!-- doc tab icon -->
<rect x="48.5" y="165.5" width="15" height="14" fill="#f4f4f4" stroke="#8a8a8a" stroke-width="1"/>
<rect x="48.5" y="165.2" width="15" height="2.4" fill="#c4526a"/>
<path d="M50.6,171 H54.6 M50.6,175 H54.6" stroke="#8a8a8a" stroke-width="1"/>
<rect x="56.4" y="169.8" width="5" height="2.4" fill="#d0d0d0" stroke="#8a8a8a" stroke-width="0.8"/><rect x="56.4" y="173.8" width="5" height="2.4" fill="#d0d0d0" stroke="#8a8a8a" stroke-width="0.8"/>
<!-- tab close -->
<path d="M198.2,168.2 L207.6,177.6 M207.6,168.2 L198.2,177.6" stroke="#6f6666" stroke-width="1"/>

<!-- logo -->
<rect x="85" y="188" width="64" height="64" fill="#fff"/>
<rect x="89.4" y="192" width="55.8" height="56.4" rx="11" fill="#2585e3"/>
<g fill="#fff">
<polygon points="109,203 135.4,214 131,233.6 127,226"/>
<polygon points="104,206 133.2,213.4 130.4,231 104,222"/>
</g>
<path d="M104,206.6 L132.6,214 L129.6,231" fill="none" stroke="#2585e3" stroke-width="0.7"/>
<polygon points="98.9,210.8 128.2,215.2 128.2,237.6 98.9,232.6" fill="#fff"/>
<path d="M98.7,210.6 L128.4,215 V237.8" fill="none" stroke="#2585e3" stroke-width="0.6"/>
<polygon points="104.9,223.8 122,226.3 122,231 104.9,228.4" fill="#2585e3"/>
<polygon points="121.5,216 126.6,216.7 126.6,219.3 121.5,218.6" fill="#2585e3"/>

<!-- combo chevrons -->
<path d="M319.4,237.4 L323,241 L326.6,237.4 M455,294.6 L458.6,298.2 L462.2,294.6" fill="none" stroke="#444" stroke-width="1.1"/>

<!-- reset arrow -->
<path d="M125.4,264.6 L121.4,268.4 L126,271.4 M122,268.2 H128.4 C134.6,268.2 135.4,275.6 129,276" fill="none" stroke="#3b74b8" stroke-width="2.2"/>
<!-- actualiser icon -->
<path d="M131.4,311.4 V297.4 H138.6" fill="none" stroke="#6f6f6f" stroke-width="1"/>
<path d="M133.6,299.4 H140.6 L143.6,302.4 V312.6 H133.6 Z" fill="#fff" stroke="#6f6f6f" stroke-width="1"/>
<path d="M140.6,299.4 V302.4 H143.6" fill="none" stroke="#6f6f6f" stroke-width="0.8"/>
<g fill="none" stroke="#6aaa94" stroke-width="2">
<path d="M138.4,306.4 A4,4 0 0 1 145.6,305"/><path d="M146.2,309 A4,4 0 0 1 139,310.4"/>
</g>
<path d="M147,302.8 V306.6 H143.2 Z M137.6,312.6 V308.8 H141.4 Z" fill="#6aaa94"/>

<!-- folders -->
<g transform="translate(1199,194)">
<path d="M0.6,3 Q0.6,1.6 2,1.6 H5.6 L7,0.2 H13.2 Q14.4,0.2 14.4,1.6 V11 H0.6 Z" fill="#fdf4df" stroke="#e9cf9d" stroke-width="0.6"/>
<path d="M0.4,13.4 L3.4,5.4 H16 L13.4,13.4 Z" fill="#e6b970"/>
</g><g transform="translate(1199,224)">
<path d="M0.6,3 Q0.6,1.6 2,1.6 H5.6 L7,0.2 H13.2 Q14.4,0.2 14.4,1.6 V11 H0.6 Z" fill="#fdf4df" stroke="#e9cf9d" stroke-width="0.6"/>
<path d="M0.4,13.4 L3.4,5.4 H16 L13.4,13.4 Z" fill="#e6b970"/>
</g><g transform="translate(1199,254.4)">
<path d="M0.6,3 Q0.6,1.6 2,1.6 H5.6 L7,0.2 H13.2 Q14.4,0.2 14.4,1.6 V11 H0.6 Z" fill="#fdf4df" stroke="#e9cf9d" stroke-width="0.6"/>
<path d="M0.4,13.4 L3.4,5.4 H16 L13.4,13.4 Z" fill="#e6b970"/>
</g>
<path d="M1200,279 C1205,282 1210,286.6 1214.2,291.4 M1214,278.6 C1209,282 1204,286.6 1199.8,291.6" fill="none" stroke="#4a4a4a" stroke-width="2"/>

<!-- pencil -->
<path d="M1373.4,202.4 L1366.4,209.6" stroke="#3b6fb5" stroke-width="3.2"/>
<path d="M1374.6,201.2 L1373.8,202" stroke="#3b6fb5" stroke-width="3" />
<polygon points="1365.4,208.4 1367.6,210.6 1364.6,211.4" fill="#3b6fb5"/>
<!-- word icon -->
<rect x="1369" y="236.9" width="8.6" height="11.8" fill="#fff" stroke="#2b579a" stroke-width="0.8"/>
<path d="M1372.4,239.4 H1376 M1372.4,241.6 H1376 M1372.4,243.8 H1376 M1372.4,246 H1376" stroke="#2b579a" stroke-width="0.9"/>
<polygon points="1362,236.6 1371.7,235.2 1371.7,250.3 1362,248.9" fill="#2b579a"/>
<text x="1363.2" y="246.4" font-family="Liberation Sans, sans-serif" font-size="8.4" font-weight="bold" fill="#fff" textLength="7.4" lengthAdjust="spacingAndGlyphs">W</text>
<!-- envelope -->
<rect x="1343.6" y="272.9" width="12.8" height="8.4" fill="#fff" stroke="#555" stroke-width="0.9"/>
<rect x="1352.4" y="274.2" width="2.2" height="2.2" fill="#444"/>
<path d="M1345.6,276.6 H1350.6 M1345.6,278.6 H1349.4" stroke="#999" stroke-width="0.8"/>

<!-- record selector pencil -->
<polygon points="53.2,323 57.2,324.6 53.8,331 50,334.2 50.2,329.4" fill="#111"/>
<polygon points="52.8,326 55.6,327.2 53.6,330.4 51.2,329.4" fill="#e9e36b"/>
<polygon points="53.6,323.8 56.4,325 55.8,326.8 53,325.6" fill="#c8743a"/>
<rect x="46" y="333" width="1.1" height="1.1" fill="#111"/><rect x="48.2" y="333" width="1.1" height="1.1" fill="#111"/>
<!-- list scrollbar arrows -->
<path d="M75.2,806.2 L71.4,809.5 L75.2,812.8 M664.8,806.2 L668.6,809.5 L664.8,812.8" fill="none" stroke="#444" stroke-width="2.1"/>

<!-- main scrollbar -->
<polygon points="1588,195.8 1595,195.8 1591.5,191.8" fill="#555"/>
<polygon points="1588,809.8 1595,809.8 1591.5,813.8" fill="#555"/>

<!-- nav buttons -->
<g fill="#333">
<rect x="76.8" y="827" width="1.3" height="7"/><polygon points="83,827 83,834 78.6,830.5"/>
<polygon points="164.4,827 164.4,834 168.6,830.5"/>
<polygon points="180.4,827 180.4,834 184.6,830.5"/><rect x="185" y="827" width="1.3" height="7"/>
<polygon points="193.8,827 193.8,834 198,830.5"/>
</g>
<polygon points="99,827 99,834 95,830.5" fill="#c3c3c3"/>
<path d="M202.6,826.6 v7.6 M198.8,830.4 h7.6 M200,827.8 l5.2,5.2 M205.2,827.8 l-5.2,5.2" stroke="#f0b354" stroke-width="0.9"/>
<path d="M212.5,822 V838 M307.5,822 V838" stroke="#d5d5d5" stroke-width="1"/>
<path d="M221,824.6 H233 L228.2,829.6 V835 H225.8 V829.6 Z" fill="#b5b5b5"/>
<path d="M229.6,832 L234.8,837 M234.8,832 L229.6,837" stroke="#b5b5b5" stroke-width="1.2"/>

<!-- status bar view icons -->
<g fill="none" stroke="#5f5f5f" stroke-width="1">
<rect x="1459.5" y="842.5" width="13" height="12"/>
<rect x="1459.5" y="842.5" width="13" height="2.6" fill="#5f5f5f"/>
<path d="M1461.6,848.6 H1464.6 M1461.6,851.6 H1464.6" />
<rect x="1466.4" y="847.8" width="4.4" height="1.6" fill="#5f5f5f" stroke="none"/><rect x="1466.4" y="850.8" width="4.4" height="1.6" fill="#5f5f5f" stroke="none"/>
<rect x="1497.5" y="842.5" width="13" height="12" fill="#fbfbfb"/>
<path d="M1497.5,845.5 H1510.5 M1501.5,842.5 V854.5 M1503.4,848.6 H1505 M1506.4,848.6 H1508.8 M1503.4,851.6 H1505 M1506.4,851.6 H1508.8"/>
<path d="M1536.4,843.5 H1547.6 M1536.4,854.5 H1547.6 M1537.8,843.5 V854.5 M1546.2,843.5 V854.5 M1536.6,849 H1547.4"/>
<rect x="1540.4" y="845.8" width="4.6" height="1.6" fill="#5f5f5f" stroke="none"/><rect x="1540.4" y="850.8" width="4.6" height="1.6" fill="#5f5f5f" stroke="none"/>
<path d="M1573.6,842.6 V849.6 H1580.6 Z"/>
<rect x="1574.5" y="851.5" width="12" height="3.4"/>
<path d="M1577.4,851.6 v1.6 M1580.4,851.6 v1.6 M1583.4,851.6 v1.6" stroke-width="0.8"/>
<path d="M1585.4,842.8 L1579.4,848.8" stroke-width="2"/>
</g>

<!-- red hand-drawn arrows -->
<g fill="none" stroke="#d81f2a" stroke-width="3" stroke-linecap="round" stroke-linejoin="round">
<path d="M857,264 C960,248 1080,226 1200,206.4"/>
<path d="M1179,203.6 C1188,203.6 1196,204.4 1203.6,205.6 C1196,208.8 1190,212.4 1183,217"/>
<path d="M1029,290.6 C1090,272 1150,252 1199,236.4"/>
<path d="M1180,234.6 C1188,234.8 1195,235.2 1201,235.8 C1196,239 1192,246 1189,253"/>
<path d="M1428.4,331.4 C1412,302 1396,274 1382.6,249"/>
<path d="M1393.4,250.4 C1389,249 1385,247.6 1381,245.8 C1381,250 1381.4,254.6 1381.8,259"/>
</g>
</svg>

<!-- ================= TASKBAR ================= -->
<div class="a" id="taskbar" style="left:0;top:860px;width:1600px;height:8px;background:linear-gradient(90deg,#203840 0%,#203840 25%,#1d3040 55%,#15233a 75%,#14203a 100%)"></div>
<div class="a" style="left:48px;top:860px;width:344px;height:8px;background:#f0f0f0;border-top:1px solid #bdbdbd;box-sizing:border-box"></div>
<div class="a" style="left:883px;top:860px;width:48px;height:8px;background:#4a5a68"></div>

<div class="a" style="left:1490px;top:860px;width:50px;height:8px;overflow:hidden"><span style="position:absolute;left:8.6px;top:5.3px;font:12.2px/12px 'Liberation Sans',sans-serif;color:#fff;white-space:pre;letter-spacing:-0.2px">11:50</span></div>
<div class="a" style="left:1595px;top:860px;width:1px;height:8px;background:#5d6a7c"></div>
</body></html>
